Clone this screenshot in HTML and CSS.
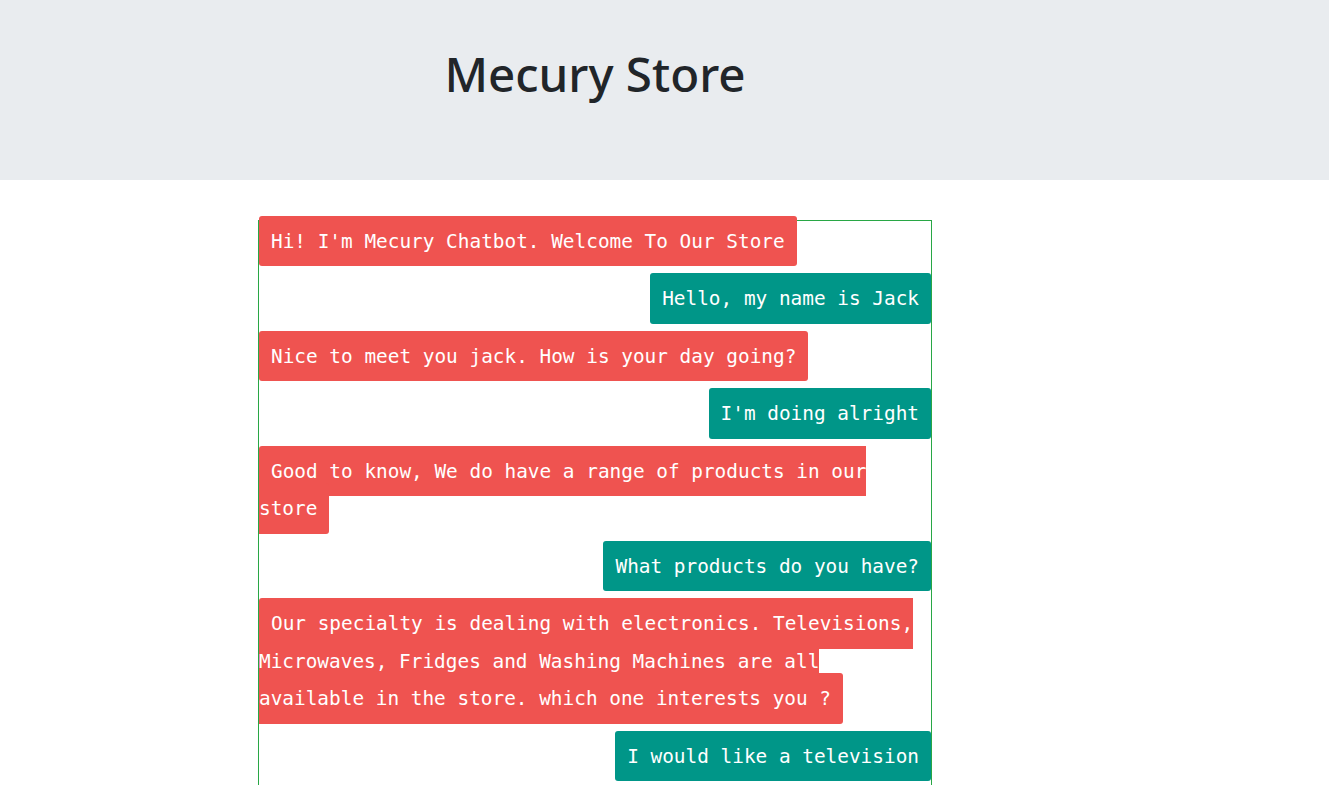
FILE: index.html
```html
<!DOCTYPE html>
<html lang="en">
<head>
<meta charset="utf-8">
<title>Mecury Store</title>
<link rel="stylesheet" href="styles.css">
</head>
<body>
<header class="jumbotron">
  <div class="column">
    <h1 class="title">Mecury Store</h1>
  </div>
</header>
<main class="column">
  <div class="chatbox">
    <p class="msg bot"><span class="bubble">Hi! I'm Mecury Chatbot. Welcome To Our Store</span></p>
    <p class="msg user"><span class="bubble">Hello, my name is Jack</span></p>
    <p class="msg bot"><span class="bubble">Nice to meet you jack. How is your day going?</span></p>
    <p class="msg user"><span class="bubble">I'm doing alright</span></p>
    <p class="msg bot"><span class="bubble">Good to know, We do have a range of products in our store</span></p>
    <p class="msg user"><span class="bubble">What products do you have?</span></p>
    <p class="msg bot"><span class="bubble">Our specialty is dealing with electronics. Televisions, Microwaves, Fridges and Washing Machines are all available in the store. which one interests you ?</span></p>
    <p class="msg user"><span class="bubble">I would like a television</span></p>
  </div>
</main>
</body>
</html>
```

FILE: styles.css
```css
html, body {
  margin: 0;
  padding: 0;
  background: #ffffff;
}

body {
  font-family: "Noto Sans", "Open Sans", sans-serif;
  color: #212529;
}

.column {
  width: 674px;
  margin-left: 258px;
}

.jumbotron {
  background: #e9ecef;
  height: 180px;
  box-sizing: border-box;
  padding-top: 45px;
}

.title {
  margin: 0;
  font-size: 47.5px;
  font-weight: 500;
  line-height: 1.2;
  text-align: center;
  color: #212529;
}

.chatbox {
  margin-top: 40px;
  border: 1px solid #28a745;
  padding-top: 1.5px;
  font-family: "DejaVu Sans Mono", "Liberation Mono", monospace;
  font-size: 19.4px;
  line-height: 37.5px;
}

.msg {
  margin: 0 0 20px 0;
}

.msg.bot {
  text-align: left;
}

.msg.user {
  text-align: right;
}

.bubble {
  color: #ffffff;
  padding: 13.7px 12px;
  border-radius: 3px;
}

.bot .bubble {
  background: #ef5350;
}

.user .bubble {
  background: #009688;
}
```
